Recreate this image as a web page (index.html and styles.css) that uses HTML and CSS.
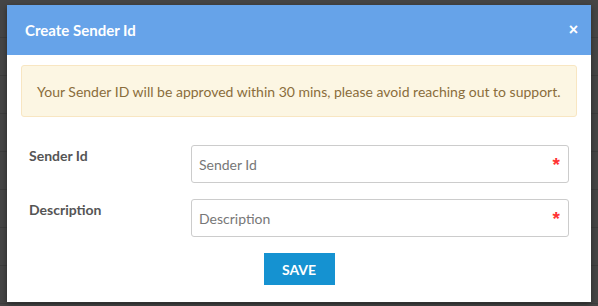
FILE: index.html
```html
<!DOCTYPE html>
<html lang="en">
<head>
    <meta charset="UTF-8">
    <meta name="viewport" content="width=device-width, initial-scale=1.0">
    <link rel="stylesheet" href="styles.css">
    <title>Create Sender Id</title>
</head>
<body>
<div class="backdrop">
  <div class="modal">
    <div class="modal-header">
      <span class="modal-title">Create Sender Id</span>
      <span class="close">&times;</span>
    </div>
    <div class="modal-body">
      <div class="alert">Your Sender ID will be approved within 30 mins, please avoid reaching out to support.</div>
      <form class="form">
        <div class="form-row">
          <label class="label" for="sender">Sender Id</label>
          <div class="field">
            <input class="input" id="sender" type="text" placeholder="Sender Id">
            <span class="req">*</span>
          </div>
        </div>
        <div class="form-row">
          <label class="label" for="desc">Description</label>
          <div class="field">
            <input class="input" id="desc" type="text" placeholder="Description">
            <span class="req">*</span>
          </div>
        </div>
        <div class="actions">
          <button class="btn-save" type="button">SAVE</button>
        </div>
      </form>
    </div>
  </div>
</div>
</body>
</html>
```

FILE: styles.css
```css
body {
  margin: 0;
  background: #454545;
  font-family: Lato, "Liberation Sans", sans-serif;
}

/* dim page behind the dialog */
.backdrop {
  height: 306px;
  overflow: hidden;
  padding: 5px 0 0 7px;
  box-sizing: border-box;
  background: repeating-linear-gradient(#454545 0, #454545 37px, #3d3d3d 37px, #3d3d3d 38px);
}

.modal {
  width: 584px;
  background: #fff;
  box-shadow: 0 2px 6px rgba(0, 0, 0, 0.4);
}

.modal-header {
  height: 50px;
  background: #66a3e9;
  display: flex;
  align-items: center;
  justify-content: space-between;
  padding: 0 13px 0 18px;
}

.modal-title {
  color: #fff;
  font-size: 15px;
  font-weight: bold;
}

.close {
  color: #fff;
  font-size: 16px;
  font-weight: bold;
  font-family: "Liberation Sans", sans-serif;
}

.modal-body {
  padding: 10px 14px 17px 14px;
}

.alert {
  height: 52px;
  box-sizing: border-box;
  display: flex;
  align-items: center;
  padding: 0 15px;
  background: #fcf6e3;
  border: 1px solid #f8e6c2;
  border-radius: 3px;
  color: #8a6d3b;
  font-size: 14px;
}

.form {
  padding-top: 28px;
}

.form-row {
  display: flex;
  margin-bottom: 16px;
}

.label {
  width: 162px;
  padding: 2px 0 0 8px;
  color: #555;
  font-size: 14px;
  font-weight: bold;
}

.field {
  position: relative;
  width: 378px;
}

.input {
  width: 100%;
  height: 38px;
  box-sizing: border-box;
  border: 1px solid #ccc;
  border-radius: 3px;
  padding: 0 7px;
  font-family: Lato, "Liberation Sans", sans-serif;
  font-size: 14px;
  color: #555;
  outline: none;
}

.input::placeholder {
  color: #777;
}

/* required marker inside the input */
.req {
  position: absolute;
  right: 9px;
  top: 9px;
  color: #f33;
  font-size: 19px;
  font-weight: bold;
  font-family: "Liberation Sans", sans-serif;
}

.actions {
  display: flex;
  justify-content: center;
}

.btn-save {
  width: 71px;
  height: 32px;
  border: none;
  background: #1592d1;
  color: #fff;
  font-family: Lato, "Liberation Sans", sans-serif;
  font-size: 14px;
  font-weight: bold;
}
```
